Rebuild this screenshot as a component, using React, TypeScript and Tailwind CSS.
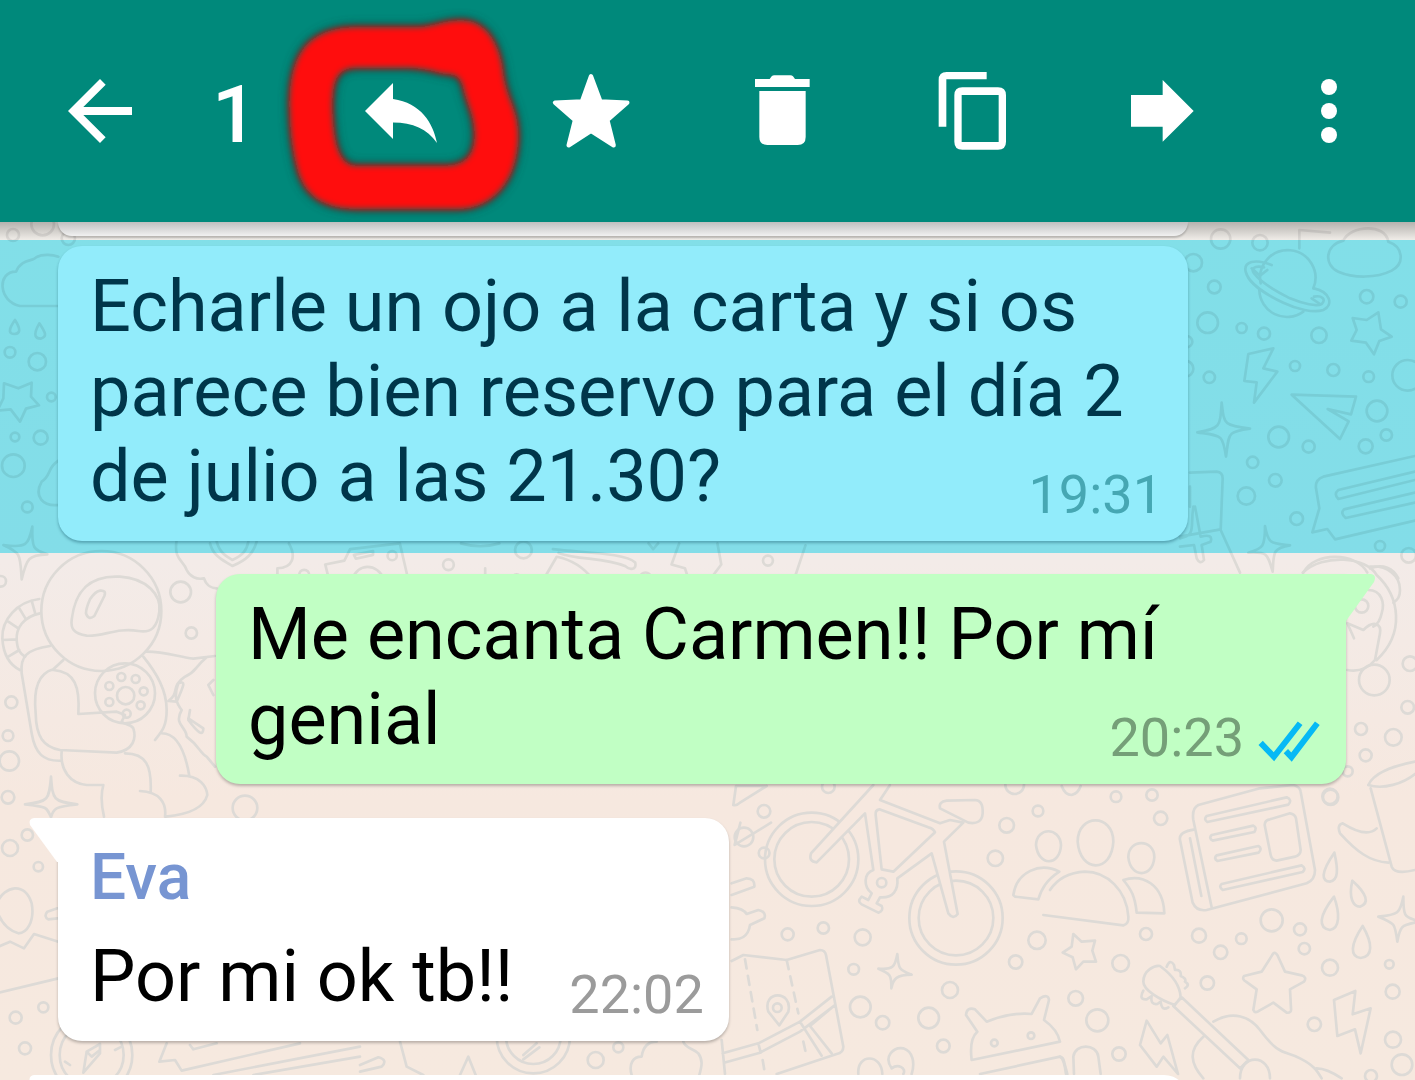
import type { ReactNode } from "react";

type Dot = [number, number, number];

function Dots({ items }: { items: Dot[] }) {
  return (
    <>
      {items.map(([x, y, r]) => (
        <circle key={`${x}-${y}`} cx={x} cy={y} r={r} />
      ))}
    </>
  );
}

/* Doodle wallpaper: each group is one patch of sketches, drawn at three times its final size. */
function Wallpaper() {
  return (
    <svg
      className="absolute inset-0 h-full w-full"
      viewBox="0 0 1415 1080"
      preserveAspectRatio="xMinYMin slice"
      fill="none"
      stroke="#dddad6"
      strokeWidth="8"
      strokeLinejoin="round"
      strokeLinecap="round"
      aria-hidden="true"
    >
      <defs>
        <linearGradient id="paper" x1="0" y1="0" x2="0" y2="1">
          <stop offset="0.2" stopColor="#f0ede8" />
          <stop offset="0.52" stopColor="#f3ebe8" />
          <stop offset="0.74" stopColor="#f6e8df" />
          <stop offset="1" stopColor="#f6e9df" />
        </linearGradient>
      </defs>
      <rect width="1415" height="1080" fill="url(#paper)" stroke="none" />

      {/* right, behind the highlighted row */}
      <g transform="translate(1180 230) scale(0.33333)">
        <Dots
          items={[
            [122, 27, 29], [240, 38, 23], [40, 98, 26], [103, 171, 19], [83, 278, 31], [185, 294, 15], [252, 311, 18],
            [417, 316, 23], [560, 200, 20], [662, 215, 18], [345, 408, 15], [460, 420, 18], [566, 440, 16], [683, 436, 46],
            [88, 442, 17], [591, 543, 31], [619, 615, 17], [557, 649, 21], [386, 650, 18], [296, 621, 31], [218, 697, 17],
            [286, 751, 19], [199, 798, 26], [350, 866, 19], [600, 948, 15], [686, 976, 22], [20, 335, 17], [16, 416, 24],
          ]}
        />
        <path d="M242 160A83 83 0 1 1 400 175M238 180A83 83 0 0 0 370 245" />
        <path d="M275 105C225 85 190 95 197 125C205 160 260 195 310 218C350 237 400 250 430 240C462 225 450 185 402 175" />
        <path d="M252 112C220 105 212 118 222 130C240 155 290 185 330 205C370 222 410 230 425 222C440 208 425 195 402 200" />
        <path d="M215 115L240 137L262 120M395 205L420 222" />
        <path d="M490 32C435 45 430 105 475 125C520 145 590 145 635 122C675 100 670 50 625 35C620 5 590-5 565-5C530-5 500 10 490 32M358 55V0L450 8" />
        <path d="M595 247L603 298L635 320L598 333L582 373L558 338L514 332L530 300L518 264L560 270Z" />
        <path d="M205 372L280 355L250 415L292 425L222 518L230 457L193 453Z" />
        <path d="M335 494L528 500L513 553L443 537L506 574L480 627Z" />
        <path d="M125 518C133 585 130 585 210 596C140 605 148 610 138 680C128 612 125 618 52 607C122 595 120 590 125 518Z" />
        <path d="M705 678L430 740Q405 748 408 775L418 835L397 907L442 897L465 928L705 872" />
        <path d="M705 725L475 780Q460 792 475 807L705 750M705 788L492 838Q480 850 497 864L705 818" />
        <path d="M30 728L110 725Q128 727 128 745L122 900L180 1028M0 920L122 898M30 770V830M40 830C30 890 50 915 0 925M45 830L62 920Q100 910 92 935L65 945L72 990Q60 1005 50 985L42 945L0 950" />
        <path d="M255 888C265 945 275 940 330 946C275 955 282 970 278 1025C262 970 262 965 205 968C250 955 255 950 255 888Z" />
        <path d="M370 1028C400 965 530 965 562 1028M570 1015C610 1000 640 1015 655 1045" />
      </g>

      {/* left, behind the highlighted row */}
      <g transform="translate(0 220) scale(0.33333)">
        <Dots
          items={[
            [39, 45, 18], [128, 12, 34], [205, 55, 20], [30, 397, 16], [112, 425, 26], [154, 531, 13], [45, 651, 13],
            [122, 653, 21], [40, 737, 34], [82, 861, 16],
          ]}
        />
        <path d="M172 258H60C-5 245-10 155 48 155C65 115 100 125 108 112C130 100 160 105 175 110" />
        <path d="M45 300C20 335 30 342 44 342C60 340 64 330 45 300ZM118 310C95 350 110 356 122 356C142 350 138 340 118 310Z" />
        <path d="M12 490L55 505L95 488L93 530L117 556L78 566L60 605L32 568L-8 572L10 535Z" />
        <path d="M175 722C140 745 155 765 125 785C100 830 130 860 175 855" />
        <path d="M97 920C95 985 100 990 142 1003C85 1005 80 1015 65 1078C60 1005 65 1000 10 975C80 985 85 975 97 920Z" />
      </g>

      {/* astronaut and lion */}
      <g transform="translate(0 540) scale(0.33333)">
        <Dots
          items={[
            [304, 213, 180], [542, 156, 31], [574, 279, 17], [375, 460, 90], [377, 467, 26], [364, 411, 12], [407, 417, 12],
            [431, 454, 12], [422, 496, 12], [328, 438, 12], [328, 486, 12], [380, 521, 12], [34, 487, 18], [24, 587, 16],
            [28, 663, 29], [24, 772, 19], [735, 804, 37], [2, 124, 16], [82, 885, 17],
          ]}
        />
        <path d="M215 240C225 150 270 105 360 110C440 115 485 165 478 215C472 260 455 280 415 273C350 262 310 290 260 287C220 280 212 265 215 240Z" />
        <path d="M300 152Q320 150 313 168L283 228Q265 242 258 220Q258 205 270 178Q285 155 300 152" />
        <path d="M118 177C50 185 5 240 7 295C10 345 30 375 60 390M120 220C70 230 48 265 50 300C52 330 60 340 75 350M95 182L105 218M58 205L78 238M25 245L55 265M8 300L50 298M25 350L58 330" />
        <path d="M150 318C80 328 60 350 65 400L95 580C105 640 130 665 185 662M190 360L160 388C115 400 100 450 107 520C108 590 130 620 180 630L350 638C400 630 410 595 400 565C390 550 375 555 365 545L375 525L350 515L235 522C240 440 225 395 160 390" />
        <path d="M430 350C470 400 500 450 500 510C500 560 485 575 465 600M185 635C180 690 210 730 260 735H310C300 770 305 800 312 830M375 640C440 640 455 680 452 755M420 753C480 755 500 790 495 830M480 580C540 575 560 660 568 708M540 707C600 705 620 740 622 765C610 810 550 825 497 830" />
        <path d="M440 335C500 335 530 350 580 356L645 348M620 352C580 385 590 395 555 410C510 440 540 460 505 483L530 485C550 440 560 420 535 430C520 470 530 490 545 510C520 555 560 560 560 590C600 620 600 640 620 650L645 680M570 510L565 540C595 580 610 590 610 565L565 535M640 420L625 435L640 465" />
        <path d="M530 0C520 60 550 60 560 90C570 110 590 120 612 115C620 140 640 145 650 145M630 10C640 50 670 60 697 78C740 60 760 40 770 5M650 5C660 40 680 50 697 60C730 45 740 30 745 5" />
        <path d="M153 710C158 780 160 785 232 793C165 800 160 805 153 832C140 800 140 800 75 793C145 785 148 780 153 710Z" />
      </g>

      {/* strips above and below the outgoing bubble */}
      <g transform="translate(220 530) scale(0.38265)" strokeWidth="7">
        <Dots
          items={[
            [220, 117, 13], [450, 67, 12], [597, 91, 14], [793, 52, 22], [775, 128, 12], [1112, 125, 14], [1432, 80, 13],
            [396, 798, 12], [898, 829, 26], [981, 809, 24], [738, 842, 15], [1422, 844, 14], [65, 830, 36],
          ]}
        />
        <path d="M180 35C200 70 190 100 150 100V130M285 130L275 90L325 80L340 50L470 35L492 130M345 130C360 85 410 85 430 130M350 65L400 55V65L355 75ZM630 35Q680 50 730 35M845 130L880 70C930 80 960 110 975 130M870 50C950 60 1060 60 1085 85C1090 105 1070 105 1060 95C1000 70 940 80 885 60M693 100V130M1120 35L1132 50L1145 35M1200 35L1180 90L1215 100L1225 130M1300 35L1310 90L1280 130M1530 40L1500 130" />
        <path d="M130 860L230 765M265 775L295 810L245 860M235 768L295 810L300 765M475 765L540 797L555 765M665 765Q675 795 700 793L900 765M575 860C590 815 630 815 640 860M1040 860C1045 800 1065 780 1085 765L1250 860M1080 860Q1095 800 1120 780M1110 860Q1120 820 1145 792M1360 765L1345 823L1440 765" />
      </g>

      {/* monkey, right of the outgoing bubble */}
      <g transform="translate(1080 560) scale(0.33333)">
        <Dots
          items={[
            [883, 360, 46], [990, 311, 22], [983, 442, 19], [843, 507, 18], [940, 532, 25], [857, 586, 18], [803, 634, 15],
            [752, 712, 23], [845, 138, 20],
          ]}
        />
        <path d="M668 38C730-20 860-10 890 45C960 110 975 220 890 300M870 20C920 15 960 45 960 90C960 115 950 120 940 128M865 90C905 90 915 130 905 160C900 185 890 195 880 200M802 190L850 210C880 180 905 190 900 220L885 300C860 330 830 335 802 330M802 190L822 235" />
      </g>

      {/* bicycle, map, robot */}
      <g transform="translate(720 770) scale(0.33333)">
        <Dots
          items={[
            [275, 268, 140], [275, 268, 112], [708, 444, 140], [708, 444, 112], [325, 50, 19], [132, 124, 19], [72, 201, 28],
            [203, 493, 18], [310, 474, 17], [428, 502, 24], [401, 598, 16], [421, 711, 31], [488, 758, 20], [626, 744, 31],
            [690, 660, 24], [670, 828, 19], [887, 576, 20], [951, 511, 26], [826, 265, 23], [860, 166, 22], [954, 123, 16],
            [884, 44, 28], [172, 713, 13], [823, 819, 10], [933, 797, 10],
          ]}
        />
        <g fill="#f6e8df">
          <path d="M460 45L273 250Q265 275 290 277L435 130L460 300C430 310 430 350 455 370L445 390L425 380Q410 395 425 403L475 428Q492 422 485 408L470 400L480 382C520 385 535 360 532 325L635 250L685 430Q700 450 713 432L672 215L730 158L690 150L660 160L480 90L510 45" />
          <path d="M478 118Q465 120 467 135L485 298L520 305L645 187Q640 175 625 172ZM680 92Q655 95 660 115L745 158Q785 165 788 130Q790 90 765 90Z" />
          <circle cx="485" cy="338" r="14" />
        </g>
        <path d="M40 105L48 48L140 48M40 105Q50 108 60 98L140 48M35 340L80 325Q105 325 103 350L35 375M35 412Q70 415 80 432L115 420Q140 425 133 445L90 465C85 500 60 510 35 508" />
        <path d="M35 573L70 555L200 570L300 540Q315 540 318 555L370 830Q370 848 350 852L170 912M15 912L5 810M8 850L115 820L240 755L335 680M12 878L120 848L240 785L345 705M240 755L305 857M270 768L335 850M270 768L345 705M115 820L122 848" />
        <path d="M75 568L112 780M200 570L235 730M250 815L260 860M128 870L135 912" strokeDasharray="28 22" />
        <path d="M178 766L145 725C125 660 220 660 205 725Z" />
        <path d="M532 552C535 600 540 600 575 614C530 615 520 625 514 655C515 615 510 610 475 596C520 600 525 590 532 552Z" />
        <path d="M755 870C750 830 755 800 772 785L738 735Q740 710 765 718L800 755C850 735 890 728 935 732L960 685Q985 670 987 690L972 750C1000 770 1015 790 1020 815ZM780 912L1020 860Q1030 862 1032 875L1042 912" />
        <path d="M948 225C950 170 1020 170 1023 225C1020 290 955 290 948 225ZM880 375C890 305 960 275 1018 305C980 330 965 355 955 388L885 380ZM415 912C410 850 485 850 487 912M550 912C560 895 535 880 515 895C490 860 520 830 550 835C580 845 585 880 575 912" />
      </g>

      {/* people, newspaper, cup, guitar */}
      <g transform="translate(1060 770) scale(0.33333)">
        <Dots
          items={[
            [168, 80, 16], [276, 75, 17], [302, 145, 20], [258, 492, 18], [182, 580, 25], [47, 685, 22], [112, 751, 33],
            [177, 852, 20], [417, 497, 21], [482, 547, 20], [544, 506, 16], [635, 451, 33], [720, 478, 18], [733, 536, 17],
            [810, 593, 24], [442, 639, 20], [763, 763, 20], [988, 583, 13], [998, 665, 21], [999, 809, 24], [1026, 884, 31],
            [933, 918, 18], [810, 79, 23],
          ]}
        />
        <path d="M53 215C53 130 160 130 160 215C155 310 60 310 53 215ZM205 262C205 205 283 205 283 262C278 325 212 325 205 262ZM-50 435L190 466Q207 462 205 440C200 360 140 305 75 305C20 308-10 330-30 360M190 330C250 310 310 345 313 430L230 428C225 380 215 360 190 330ZM5 48Q15 75 35 75Q55 70 62 48" />
        <path d="M455 412L400 150Q395 115 415 105L600 55L700 45Q720 50 722 65L765 300Q765 330 740 340L440 420Q410 425 398 398L360 210Q355 185 405 178M390 205L424 378" />
        <path d="M440 138L680 82Q698 90 685 104L442 156Q430 148 440 138ZM455 195L580 167Q592 172 583 186L458 212Q445 205 455 195ZM470 256L595 228Q608 235 596 248L472 273Q460 265 470 256ZM485 342L725 286Q740 295 728 306L488 360Q475 350 485 342Z" />
        <path d="M630 148L690 130Q705 132 708 145L722 240Q722 255 705 260L650 272Q635 270 632 255L614 165Q614 150 630 148Z" />
        <path d="M925 45C940 10 990-10 1065-25M925 45C970 60 1030 40 1065 12M932 55L995 290Q1005 315 1065 300M950 175Q920 205 848 160Q830 165 840 190C890 245 930 275 985 278" />
        <path d="M823 248C780 310 785 335 810 335C835 330 835 300 823 248ZM877 332C865 385 880 410 900 410C930 400 920 370 877 332ZM822 380C775 440 775 475 810 480C840 475 840 430 822 380ZM908 468C870 525 870 560 902 564C940 560 938 520 908 468Z" />
        <path d="M1030 380C1030 440 1035 440 1065 450M1065 458C1025 465 1020 470 1012 515C1005 460 1005 460 955 440C1015 435 1020 430 1030 380" />
        <path d="M640 550L605 605L552 618Q545 628 558 635L590 658L580 720Q585 732 598 722L640 698L680 728Q695 730 693 715L690 658L732 635Q742 622 725 616L675 605L652 555Q645 545 640 550Z" />
        <path d="M40 492L65 515L105 512L97 542L108 575L70 575L48 598L38 562L8 548L35 530Z" />
        <path d="M260 752L302 820L322 795L354 912L310 860L290 890L240 825ZM822 690L886 663L878 733L932 715L902 850L885 778L832 798Z" />
        <path d="M345 705C300 690 250 660 250 635C250 600 285 585 300 588C330 610 360 640 362 682ZM340 708L365 682L565 870L540 895ZM460 755C520 720 570 740 600 780C660 860 670 840 720 865C760 885 770 900 785 925M430 800C385 840 390 880 430 925M770 895Q800 895 845 925" />
        <path d="M540 925C540 850 630 850 630 925M320 590Q330 565 342 585L345 600Q365 598 362 618Q380 625 375 635Q392 645 375 655M250 662Q235 690 260 688L275 678Q270 705 292 702L302 695Q305 725 325 712M42 912L40 860C45 820 110 820 115 860L122 912M0 860Q12 865 18 912" />
      </g>

      {/* bottom left corner */}
      <g transform="translate(0 800) scale(0.33333)">
        <Dots items={[[30, 144, 24], [115, 200, 14], [47, 653, 18], [130, 622, 15], [75, 745, 18], [275, 765, 122], [275, 765, 96]]} />
        <path d="M-10 310C15 255 75 245 95 310C105 365 80 400 55 400C20 390 0 360-10 330M172 325L142 335Q130 350 145 358L172 355M-5 440L30 425L72 445L102 402L175 425M-5 578L175 535M250 818L260 755L300 732V760ZM260 755L275 770L300 750M345 750L365 740M195 785L210 795" />
        <path d="M500 730L478 785L525 780L545 812L900 730M570 735L580 748L650 730M640 825L1080 740M1080 770L760 825" />
      </g>

      {/* below the last full bubble */}
      <g transform="translate(360 960) scale(0.33333)">
        <Dots items={[[707, 300, 24], [775, 262, 15], [520, 230, 110], [520, 230, 82]]} />
        <path d="M0 315L55 292Q85 300 65 320L0 335M120 245L140 320L190 345M300 345L325 290L347 345M490 285L530 250M490 298L538 262M815 345C805 310 820 290 845 290C850 255 870 245 890 245M970 245C975 265 1000 265 1015 280C1030 300 1025 320 1018 345" />
      </g>
    </svg>
  );
}

function Action({ label, viewBox, children, extra }: { label: string; viewBox: string; children: ReactNode; extra?: ReactNode }) {
  return (
    <button type="button" aria-label={label} className="relative flex h-full flex-1 items-center justify-center">
      <svg className="h-24 w-24" viewBox={viewBox} fill="#fff" aria-hidden="true">
        {children}
      </svg>
      {extra}
    </button>
  );
}

const MARKER =
  "M748 330C746 190 780 82 950 80H1130C1180 80 1210 60 1260 60C1340 58 1376 130 1388 200C1398 300 1436 320 1436 410C1432 540 1366 626 1250 628H950C850 626 794 590 772 510C756 450 750 400 748 330Z" +
  "M878 330C882 400 888 496 950 496H1220C1280 494 1304 460 1303 400C1300 340 1282 320 1270 268C1258 218 1240 228 1200 220C1160 208 1130 204 1090 204H950C890 206 878 240 878 330Z";

function MarkerRing() {
  return (
    <svg
      className="pointer-events-none absolute top-0 left-1/2 h-[222px] w-[260px] -translate-x-1/2"
      viewBox="693 0 780 666"
      aria-hidden="true"
    >
      <defs>
        <filter id="halo" x="-20%" y="-20%" width="140%" height="140%">
          <feGaussianBlur stdDeviation="14" />
        </filter>
        <filter id="soft" x="-20%" y="-20%" width="140%" height="140%">
          <feGaussianBlur stdDeviation="9" />
        </filter>
      </defs>
      <path d={MARKER} fillRule="evenodd" fill="#00443c" stroke="#00443c" strokeWidth="14" opacity="0.75" filter="url(#halo)" />
      <path d={MARKER} fillRule="evenodd" fill="#ff0808" filter="url(#soft)" />
    </svg>
  );
}

function Header() {
  return (
    <header className="relative flex h-[222px] flex-none items-center bg-[#00897b] pr-3.5 text-white">
      <button type="button" aria-label="Atrás" className="flex h-full w-[200px] items-center justify-center">
        <svg className="h-24 w-24" viewBox="0 0 24 24" fill="#fff" aria-hidden="true">
          <path d="M20 11H7.83l5.59-5.59L12 4l-8 8 8 8 1.41-1.41L7.83 13H20v-2z" />
        </svg>
      </button>
      <span className="w-[106px] pt-2 pl-3 text-[80px] leading-[94px] font-medium">1</span>
      <Action label="Responder" viewBox="0 0 24 24" extra={<MarkerRing />}>
        <path d="M10 9V5l-7 7 7 7v-4.1c5 0 8.5 1.6 11 5.1-1-5-4-10-11-11z" />
      </Action>
      <Action label="Destacar" viewBox="39 39 288 288">
        <path
          d="M183 79L211 154L292 158L232 210L251 286L183 243L116 286L135 210L75 158L156 154Z"
          stroke="#fff"
          strokeWidth="13"
          strokeLinejoin="round"
        />
      </Action>
      <Action label="Eliminar" viewBox="609 39 288 288">
        <path d="M672 87H716L722 79Q725 76 730 76H778Q783 76 786 79L792 87H836V111H672ZM685 123H824V261Q824 285 800 285H709Q685 285 685 261Z" />
      </Action>
      <Action label="Copiar" viewBox="1179 39 288 288">
        <path d="M1367 66V88H1246V230H1223V90Q1223 66 1247 66Z" />
        <path
          fillRule="evenodd"
          d="M1294 112H1401Q1425 112 1425 136V275Q1425 299 1401 299H1294Q1270 299 1270 275V136Q1270 112 1294 112ZM1292 135V276H1403V135Z"
        />
      </Action>
      <Action label="Reenviar" viewBox="39 39 288 288">
        <path d="M90 135H185V90L278 183L185 275V230H90Z" />
      </Action>
      <button type="button" aria-label="Más opciones" className="flex h-full w-36 items-center justify-center">
        <svg className="h-24 w-24" viewBox="540 39 288 288" fill="#fff" aria-hidden="true">
          <circle cx="684" cy="111" r="24" />
          <circle cx="684" cy="183" r="24" />
          <circle cx="684" cy="255" r="24" />
        </svg>
      </button>
    </header>
  );
}

function LeftTail() {
  return (
    <svg className="absolute top-0 right-full h-[46px] w-[30px]" viewBox="0 0 30 46" fill="#fff" aria-hidden="true">
      <path d="M30 0H6Q0 1 2 7L29 44H30Z" />
    </svg>
  );
}

function RightTail() {
  return (
    <svg className="absolute top-0 left-full h-[48px] w-[30px]" viewBox="0 0 30 48" fill="#c1ffc4" aria-hidden="true">
      <path d="M0 0H25Q31 1 28 8L0 47Z" />
    </svg>
  );
}

const BUBBLE_SHADOW = "shadow-[0_2px_3px_rgba(0,0,0,0.25)]";

export default function App() {
  return (
    <div className="relative flex h-screen w-full flex-col overflow-hidden bg-[#f6e9df] font-[Roboto,sans-serif] text-black">
      <Wallpaper />
      <Header />
      <main className="relative flex flex-1 flex-col overflow-hidden">
        <div className="relative h-[18px] flex-none pr-[69px] pl-[58px]">
          <div className="h-[14px] max-w-[1130px] rounded-b-[24px] bg-white shadow-[0_2px_2px_rgba(0,0,0,0.2)]" />
          <div className="absolute inset-0 bg-linear-to-b from-black/25 to-transparent" />
        </div>

        <div className="relative flex-none pt-1.5 pr-[69px] pb-3 pl-[58px]">
          <div className="absolute inset-0 bg-[#8af0ff] mix-blend-multiply" />
          <article className="relative w-fit max-w-[1130px] rounded-[24px] bg-[#92ecfb] pt-[18px] pr-[25px] pb-3.5 pl-8 text-[#00364a] shadow-[0_2px_3px_rgba(0,60,80,0.35)]">
            <p className="flow-root text-[72px] leading-[85px]">
              Echarle un ojo a la carta y si os parece bien reservo para el día 2 de julio a las 21.30?
              <time className="float-right mt-[29px] text-[54px] leading-[64px] text-[#46a7b3]">19:31</time>
            </p>
          </article>
        </div>

        <div className="mt-[21px] flex flex-none justify-end pr-[69px] pl-[58px]">
          <article className={`relative max-w-[1130px] rounded-[24px] rounded-tr-none bg-[#c1ffc4] pt-[18px] pr-[25px] pb-3.5 pl-8 ${BUBBLE_SHADOW}`}>
            <RightTail />
            <p className="flow-root text-[72px] leading-[85px]">
              Me encanta Carmen!! Por mí genial
              <span className="float-right mt-[29px] flex items-end gap-3.5">
                <time className="text-[54px] leading-[64px] text-[#759f78]">20:23</time>
                <svg className="mb-2 h-[42px] w-[63px]" viewBox="534 480 190 125" fill="none" stroke="#06b9f5" strokeWidth="18" role="img" aria-label="Leído">
                  <path d="M542 548L582 590L661 489M618 573L635 591L713 489" />
                </svg>
              </span>
            </p>
          </article>
        </div>

        <div className="mt-[34px] flex flex-none pr-[69px] pl-[58px]">
          <article className={`relative rounded-[24px] rounded-tl-none bg-white pt-[22px] pr-[25px] pb-3.5 pl-8 ${BUBBLE_SHADOW}`}>
            <LeftTail />
            <h2 className="text-[64px] leading-[75px] font-medium text-[#7795d2]">Eva</h2>
            <div className="mt-[19px] flex items-end gap-14">
              <p className="pb-2 text-[72px] leading-[85px]">Por mi ok tb!!</p>
              <time className="text-[54px] leading-[64px] text-[#9b9b9b]">22:02</time>
            </div>
          </article>
        </div>

        <div className="mt-[34px] flex-none pr-[69px] pl-[58px]">
          <div className="relative h-40 max-w-[1130px] rounded-[24px] rounded-tl-none bg-white">
            <LeftTail />
          </div>
        </div>
      </main>
    </div>
  );
}
